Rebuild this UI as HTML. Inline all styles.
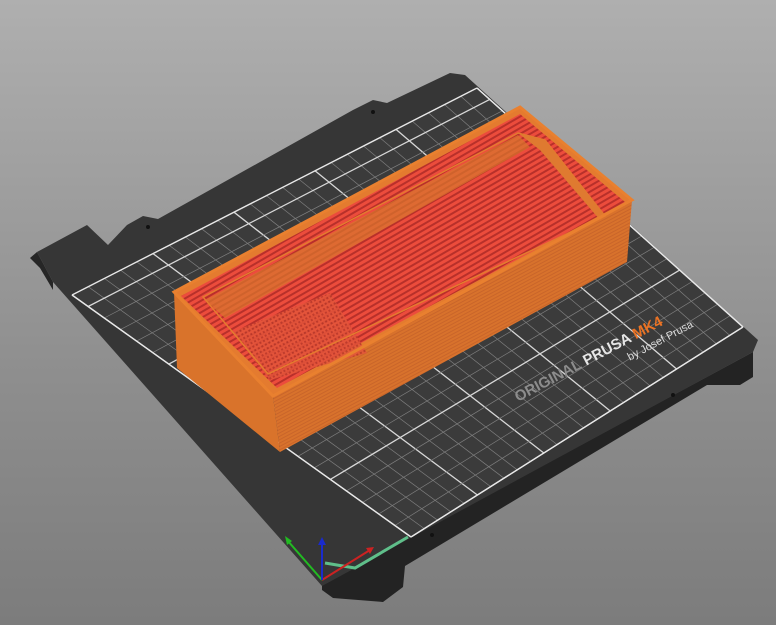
<!DOCTYPE html>
<html><head><meta charset="utf-8"><style>
html,body{margin:0;padding:0;width:776px;height:625px;overflow:hidden;background:linear-gradient(#afafaf,#8e8e8e 60%,#7c7c7c);}
svg{position:absolute;left:0;top:0}
</style></head><body>
<svg width="776" height="625" viewBox="0 0 776 625" xmlns="http://www.w3.org/2000/svg">
<defs>
<pattern id="st" width="5" height="5" patternUnits="userSpaceOnUse" patternTransform="rotate(60)">
<rect width="5" height="5" fill="#ec4c3c"/><rect width="2" height="5" fill="#b8302a"/></pattern>
<pattern id="ck" width="4" height="4" patternUnits="userSpaceOnUse" patternTransform="rotate(-28)">
<rect width="4" height="4" fill="#e3553a"/><rect width="2" height="2" fill="#b8392a"/></pattern>
<pattern id="or" width="3" height="3" patternUnits="userSpaceOnUse" patternTransform="rotate(-28)">
<rect width="3" height="3" fill="#d8722c"/><rect width="3" height="1" fill="#c9652a"/></pattern>
</defs>
<polygon points="322,585 753,352 753,377 740,385 707,385 405,566 403,587 383,602 333,598 322,590" fill="#232323"/>
<polygon points="30,258 37,252 53,282 53,290 40,268" fill="#262626"/>
<polygon points="37,252 87,225 108,245 127,225 143,216 158,219 353,110 373,100 387,103 450,73 465,75 758,340 753,352 322,586 53,282" fill="#363636"/>
<polygon points="72,295 477,88 743,327 411,537" fill="#3b3b3b"/>
<g id="grid"></g>
<circle cx="148" cy="227" r="2" fill="#111"/><circle cx="373" cy="112" r="2" fill="#111"/>
<circle cx="673" cy="395" r="2" fill="#111"/><circle cx="432" cy="535" r="2" fill="#111"/>
<g transform="translate(518,402) rotate(-28)" font-family="Liberation Sans, sans-serif" font-weight="bold">
<text x="0" y="0" font-size="15" fill="#8c8c8c">ORIGINAL <tspan fill="#e6e6e6">PRUSA</tspan> <tspan fill="#ea7325">MK4</tspan></text>
<text x="118" y="16" font-size="11" fill="#dcdcdc" font-weight="normal">by Josef Prusa</text>
</g>
<polyline points="325,563 355,568 408,537" fill="none" stroke="#5fbf8a" stroke-width="3"/>
<line x1="322" y1="580" x2="287" y2="540" stroke="#22bb22" stroke-width="2"/>
<polygon points="285,536 292,541 287,545" fill="#22bb22"/>
<line x1="322" y1="580" x2="370" y2="550" stroke="#cc2222" stroke-width="2"/>
<polygon points="374,547 366,548 370,554" fill="#cc2222"/>
<line x1="322" y1="580" x2="322" y2="543" stroke="#1a2bcc" stroke-width="2"/>
<polygon points="322,537 318,545 326,545" fill="#1a2bcc"/>
<polygon points="174,292 273,396 280,452 177,368" fill="#d9732b"/>
<polygon points="273,396 632,200 627,262 280,452" fill="url(#or)"/>
<polygon points="174,292 520,107 632,200 273,396" fill="#e47b2f"/>
<polygon points="181,296 520,114 625,202 277,388" fill="url(#st)"/>
<polygon points="205,300 518,135 530,147 225,318" fill="#d8782e" opacity="0.7"/>
<polygon points="232,332 330,293 367,353 270,380" fill="url(#ck)" opacity="0.85"/>
<polygon points="203,297 518,133 545,140 605,216 268,374" fill="none" stroke="#e47b2f" stroke-width="1.5"/>
<polygon points="518,133 545,140 605,216 600,220 540,150" fill="#df7a30"/>
<polygon points="174,292 520,107 632,200 273,396" fill="none" stroke="#e9802f" stroke-width="3"/>
</svg>
<script>
(function(){
var O=[411,537],R=[743,327],L=[72,295],T=[477,88];
function P(u,v){var a=[O[0]+(R[0]-O[0])*u,O[1]+(R[1]-O[1])*u],b=[L[0]+(T[0]-L[0])*u,L[1]+(T[1]-L[1])*u];return [a[0]+(b[0]-a[0])*v,a[1]+(b[1]-a[1])*v];}
var g=document.getElementById('grid'),s='';
function ln(p,q,c,w){s+='<line x1="'+p[0].toFixed(1)+'" y1="'+p[1].toFixed(1)+'" x2="'+q[0].toFixed(1)+'" y2="'+q[1].toFixed(1)+'" stroke="'+c+'" stroke-width="'+w+'"/>';}
var NX=25,NY=21;
for(var i=0;i<=NX;i++){var m=(i%5==0);ln(P(i/NX,0),P(i/NX,1),m?'#d8d8d8':'#7e7e7e',m?1.3:0.7);}
for(var j=0;j<=NY;j++){var m=(j%5==0);ln(P(0,j/NY),P(1,j/NY),m?'#d8d8d8':'#7e7e7e',m?1.3:0.7);}
ln(P(0,1),P(1,1),'#e8e8e8',1.4);ln(P(1,0),P(1,1),'#e8e8e8',1.4);ln(P(0,0),P(0,1),'#e8e8e8',1.4);ln(P(0,0),P(1,0),'#e8e8e8',1.4);
g.innerHTML=s;
})();
</script>
</body></html>
